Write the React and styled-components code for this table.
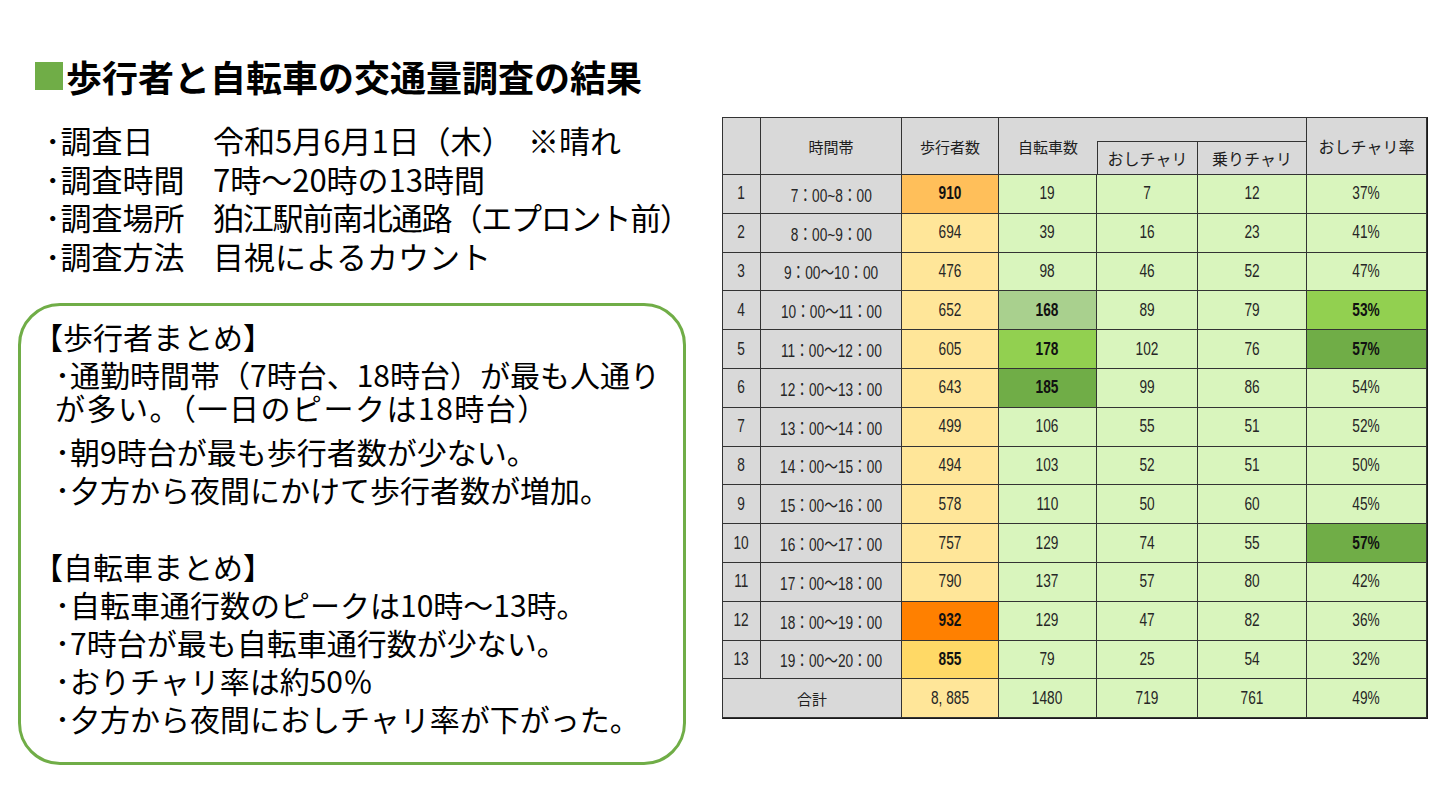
import styled, { createGlobalStyle } from "styled-components"

const GlobalStyle = createGlobalStyle`
  body {
    margin: 0;
    background: #ffffff;
    font-family: "Noto Sans CJK JP", sans-serif;
    color: #000;
  }
`

const Page = styled.div`
  width: 1440px;
  height: 810px;
  box-sizing: border-box;
  padding: 55px 0 0 18px;
  display: flex;
  align-items: flex-start;
  gap: 36px;
  overflow: hidden;
`

const LeftColumn = styled.div`
  width: 668px;
  display: flex;
  flex-direction: column;
`

const Title = styled.h1`
  margin: 0 0 0 17px;
  display: flex;
  align-items: center;
  gap: 3px;
  font-size: 36px;
  font-weight: 700;
  line-height: 42px;
  white-space: nowrap;
`

const TitleMark = styled.span`
  width: 28px;
  height: 28px;
  background: #70ad47;
  flex-shrink: 0;
`

const InfoList = styled.div`
  margin-top: 24px;
  padding-left: 27px;
  display: grid;
  grid-template-columns: 168px auto;
  font-size: 31px;
  line-height: 38.5px;
  white-space: nowrap;
`

const Tight = styled.span`
  letter-spacing: ${(p) => p.$ls || 0}px;
`

const SummaryBox = styled.div`
  margin-top: 28px;
  height: 462px;
  box-sizing: border-box;
  border: 3px solid #70ad47;
  border-radius: 42px;
  padding: 14px 0 0 34px;
  font-size: 30px;
  line-height: 33px;
  white-space: nowrap;
`

const BoxHeading = styled.div`
  margin-left: -22px;
  margin-top: ${(p) => p.$top || 0}px;
  margin-bottom: ${(p) => p.$bottom || 0}px;
`

const BoxLine = styled.div`
  margin-top: ${(p) => p.$top ?? 5}px;
`

const Table = styled.div`
  margin-top: 62px;
  display: grid;
  grid-template-columns: 38px 141px 97px 98px 101px 109px 120px;
  grid-template-rows: 24px 33px repeat(14, 38.8px);
  border-top: 1px solid #333;
  border-left: 1px solid #333;
  border-right: 1px solid #1a1a1a;
  border-bottom: 1px solid #1a1a1a;
`

const Cell = styled.div`
  display: flex;
  align-items: center;
  justify-content: center;
  grid-row: ${(p) => (p.$rows ? `span ${p.$rows}` : "auto")};
  grid-column: ${(p) => (p.$cols ? `span ${p.$cols}` : "auto")};
  background: ${(p) => p.$bg || "#d9d9d9"};
  border-right: ${(p) => (p.$noRight ? "none" : "1px solid #333")};
  border-bottom: 1px solid #333;
  border-left: ${(p) => (p.$left ? "1px solid #333" : "none")};
  color: #1e1e1e;
  white-space: nowrap;
`

const HeadCell = styled(Cell)`
  font-family: "Noto Sans CJK JP", sans-serif;
  font-size: ${(p) => p.$size || 15}px;
`

const DataCell = styled(Cell)`
  font-family: "Liberation Sans", "Noto Sans CJK JP", sans-serif;
  font-size: 18px;
  font-weight: ${(p) => (p.$bold ? 700 : 400)};
  color: ${(p) => (p.$bold ? "#111" : "#262626")};
`

const Narrow = styled.span`
  display: inline-block;
  transform: scaleX(0.76);
`

const PED = "#ffe699"
const BIKE = "#d9f5bd"

const rows = [
  ["1", "7：00~8：00", 910, 19, 7, 12, "37%", { ped: "#ffbf5a" }],
  ["2", "8：00~9：00", 694, 39, 16, 23, "41%", {}],
  ["3", "9：00～10：00", 476, 98, 46, 52, "47%", {}],
  ["4", "10：00～11：00", 652, 168, 89, 79, "53%", { bike: "#a9d08e", rate: "#92d050" }],
  ["5", "11：00～12：00", 605, 178, 102, 76, "57%", { bike: "#92d050", rate: "#70ad47" }],
  ["6", "12：00～13：00", 643, 185, 99, 86, "54%", { bike: "#70ad47" }],
  ["7", "13：00～14：00", 499, 106, 55, 51, "52%", {}],
  ["8", "14：00～15：00", 494, 103, 52, 51, "50%", {}],
  ["9", "15：00～16：00", 578, 110, 50, 60, "45%", {}],
  ["10", "16：00～17：00", 757, 129, 74, 55, "57%", { rate: "#70ad47" }],
  ["11", "17：00～18：00", 790, 137, 57, 80, "42%", {}],
  ["12", "18：00～19：00", 932, 129, 47, 82, "36%", { ped: "#ff8000" }],
  ["13", "19：00～20：00", 855, 79, 25, 54, "32%", { ped: "#ffd966" }],
]

function Num({ children, ...rest }) {
  return (
    <DataCell {...rest}>
      <Narrow>{children}</Narrow>
    </DataCell>
  )
}

function TrafficTable() {
  return (
    <Table>
      <HeadCell $rows={2} />
      <HeadCell $rows={2}>時間帯</HeadCell>
      <HeadCell $rows={2}>歩行者数</HeadCell>
      <HeadCell $rows={2} $noRight>自転車数</HeadCell>
      <HeadCell $cols={2} />
      <HeadCell $rows={2} $size={16}>おしチャリ率</HeadCell>
      <HeadCell $left $size={16}>おしチャリ</HeadCell>
      <HeadCell $size={16}>乗りチャリ</HeadCell>

      {rows.flatMap(([no, time, ped, bike, push, ride, rate, hl]) => [
        <Num key={no + "n"}>{no}</Num>,
        <Num key={no + "t"}>{time}</Num>,
        <Num key={no + "p"} $bg={hl.ped || PED} $bold={!!hl.ped}>{ped}</Num>,
        <Num key={no + "b"} $bg={hl.bike || BIKE} $bold={!!hl.bike}>{bike}</Num>,
        <Num key={no + "o"} $bg={BIKE}>{push}</Num>,
        <Num key={no + "r"} $bg={BIKE}>{ride}</Num>,
        <Num key={no + "x"} $bg={hl.rate || BIKE} $bold={!!hl.rate}>{rate}</Num>,
      ])}

      <HeadCell $cols={2}>合計</HeadCell>
      <Num $bg={PED}>8, 885</Num>
      <Num $bg={BIKE}>1480</Num>
      <Num $bg={BIKE}>719</Num>
      <Num $bg={BIKE}>761</Num>
      <Num $bg={BIKE}>49%</Num>
    </Table>
  )
}

export default function App() {
  return (
    <>
      <GlobalStyle />
      <Page>
        <LeftColumn>
          <Title>
            <TitleMark />
            歩行者と自転車の交通量調査の結果
          </Title>

          <InfoList>
            <span>･調査日</span>
            <span>令和5月6月1日（木）　※晴れ</span>
            <span>･調査時間</span>
            <span>7時～20時の13時間</span>
            <span>･調査場所</span>
            <Tight $ls={-1.2}>狛江駅前南北通路（エプロント前）</Tight>
            <span>･調査方法</span>
            <span>目視によるカウント</span>
          </InfoList>

          <SummaryBox>
            <BoxHeading $bottom={5}>【歩行者まとめ】</BoxHeading>
            <BoxLine>
              ･通勤時間帯（7時台、18時台）が最も人通り
              <br />
              <Tight $ls={1.5}>が多い。（一日のピークは18時台）</Tight>
            </BoxLine>
            <BoxLine $top={11}>･朝9時台が最も歩行者数が少ない。</BoxLine>
            <BoxLine>･夕方から夜間にかけて歩行者数が増加。</BoxLine>

            <BoxHeading $top={44}>【自転車まとめ】</BoxHeading>
            <BoxLine>･自転車通行数のピークは10時～13時。</BoxLine>
            <BoxLine>･7時台が最も自転車通行数が少ない。</BoxLine>
            <BoxLine>･おりチャリ率は約50％</BoxLine>
            <BoxLine>･夕方から夜間におしチャリ率が下がった。</BoxLine>
          </SummaryBox>
        </LeftColumn>

        <TrafficTable />
      </Page>
    </>
  )
}
